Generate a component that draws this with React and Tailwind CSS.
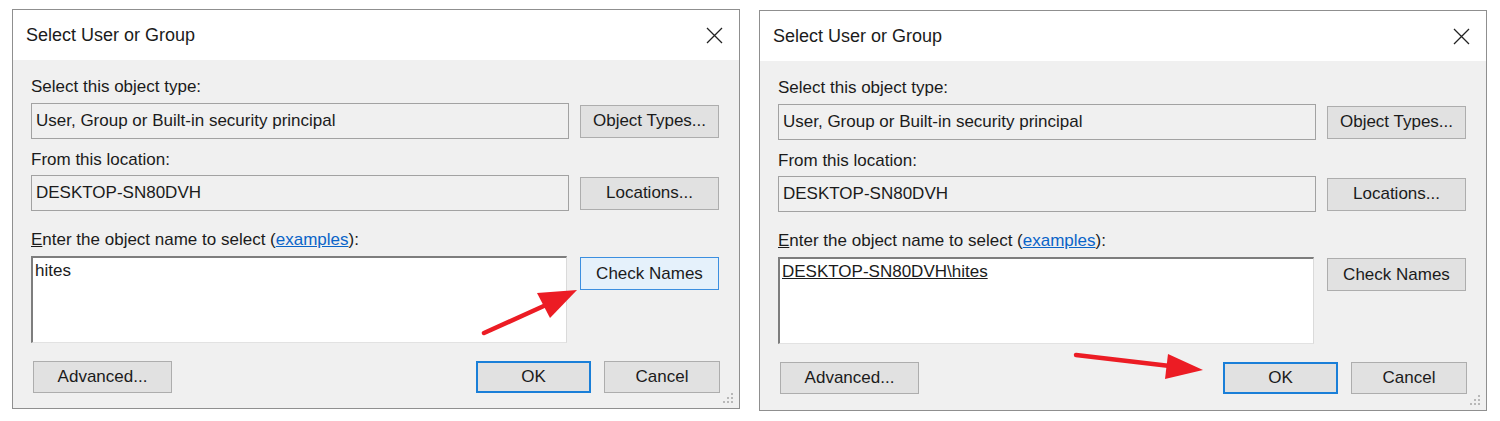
import React from "react";

const FONT = { fontFamily: '"Liberation Sans", Arial, sans-serif' };

function Btn({ children, variant = "normal", className = "" }) {
  const styles = {
    normal: "border border-[#adadad] bg-[#e1e1e1]",
    focus: "border border-[#3c8fe0] bg-[#e5f1fb]",
    default: "border-2 border-[#1a7fd8] bg-[#e1e1e1]",
  };
  return (
    <div
      className={`flex shrink-0 items-center justify-center text-[17px] text-[#1b1b1b] ${styles[variant]} ${className}`}
    >
      {children}
    </div>
  );
}

function CloseX() {
  return (
    <svg width="17" height="17" viewBox="0 0 17 17">
      <path d="M1 1 L16 16 M16 1 L1 16" stroke="#222" strokeWidth="1.3" fill="none" />
    </svg>
  );
}

function Grip() {
  const dots = [
    [10, 2],
    [6, 6],
    [10, 6],
    [2, 10],
    [6, 10],
    [10, 10],
  ];
  return (
    <svg width="13" height="13" viewBox="0 0 13 13" className="absolute bottom-[4px] right-[5px]">
      {dots.map(([x, y], i) => (
        <rect key={i} x={x} y={y} width="2" height="2" fill="#b8b8b8" />
      ))}
    </svg>
  );
}

function Dialog({ resolved, className = "" }) {
  return (
    <div className={`relative flex w-[728px] shrink-0 flex-col border border-[#8f8f8f] bg-[#f0f0f0] ${className}`}>
      <div className="flex h-[50px] items-center justify-between bg-white pl-[13px] pr-[16px]">
        <span className="text-[18px] text-[#1b1b1b]">Select User or Group</span>
        <CloseX />
      </div>
      <div className="flex flex-col pb-[15px] pl-[18px] pr-[20px] pt-[17px] text-[17px] text-[#1b1b1b]">
        <div className="h-[20px] leading-[20px]">Select this object type:</div>
        <div className="mt-[6px] flex items-center gap-[11px]">
          <div className="flex h-[36px] w-[538px] items-center border border-[#a2a2a2] bg-[#f0f0f0] pl-[4px]">
            User, Group or Built-in security principal
          </div>
          <Btn className="h-[33px] w-[139px]">Object Types...</Btn>
        </div>
        <div className="mt-[11px] h-[20px] leading-[20px]">From this location:</div>
        <div className="mt-[5px] flex items-center gap-[11px]">
          <div className="flex h-[36px] w-[538px] items-center border border-[#a2a2a2] bg-[#f0f0f0] pl-[4px]">
            DESKTOP-SN80DVH
          </div>
          <Btn className="h-[33px] w-[139px]">Locations...</Btn>
        </div>
        <div className="mt-[19px] h-[20px] leading-[20px]">
          <span className="underline">E</span>nter the object name to select (
          <span className="text-[#0a64c8] underline">examples</span>):
        </div>
        <div className="mt-[6px] flex items-start gap-[13px]">
          <div className="h-[87px] w-[536px] border-b border-l-2 border-r border-t-2 border-b-[#e2e2e2] border-l-[#7d7d7d] border-r-[#dadada] border-t-[#7d7d7d] bg-white pl-[2px] pt-[3px] leading-[20px]">
            {resolved ? <span className="underline">DESKTOP-SN80DVH\hites</span> : "hites"}
          </div>
          <Btn variant={resolved ? "normal" : "focus"} className="mt-[1px] h-[33px] w-[139px]">
            Check Names
          </Btn>
        </div>
        <div className="-mr-[1px] ml-[2px] mt-[18px] flex items-center">
          <Btn className="h-[32px] w-[139px]">Advanced...</Btn>
          <div className="ml-auto flex gap-[13px]">
            <Btn variant="default" className="h-[32px] w-[115px]">OK</Btn>
            <Btn className="h-[32px] w-[116px]">Cancel</Btn>
          </div>
        </div>
      </div>
      <Grip />
    </div>
  );
}

export default function App() {
  return (
    <div className="relative h-[421px] w-[1500px] overflow-hidden bg-white" style={FONT}>
      <div className="flex items-start gap-[19px] pl-[12px] pt-[9px]">
        <Dialog resolved={false} />
        <Dialog resolved={true} className="mt-[1px] h-[401px]" />
      </div>
      <svg className="pointer-events-none absolute inset-0" width="1500" height="421" viewBox="0 0 1500 421">
        <line x1="484" y1="333" x2="546" y2="305" stroke="#ec1c24" strokeWidth="4.5" strokeLinecap="round" />
        <polygon points="577,290 537,293 550,318" fill="#ec1c24" />
        <line x1="1076" y1="355" x2="1170" y2="366" stroke="#ec1c24" strokeWidth="4.5" strokeLinecap="round" />
        <polygon points="1203,370 1168,354 1165,379" fill="#ec1c24" />
      </svg>
    </div>
  );
}
